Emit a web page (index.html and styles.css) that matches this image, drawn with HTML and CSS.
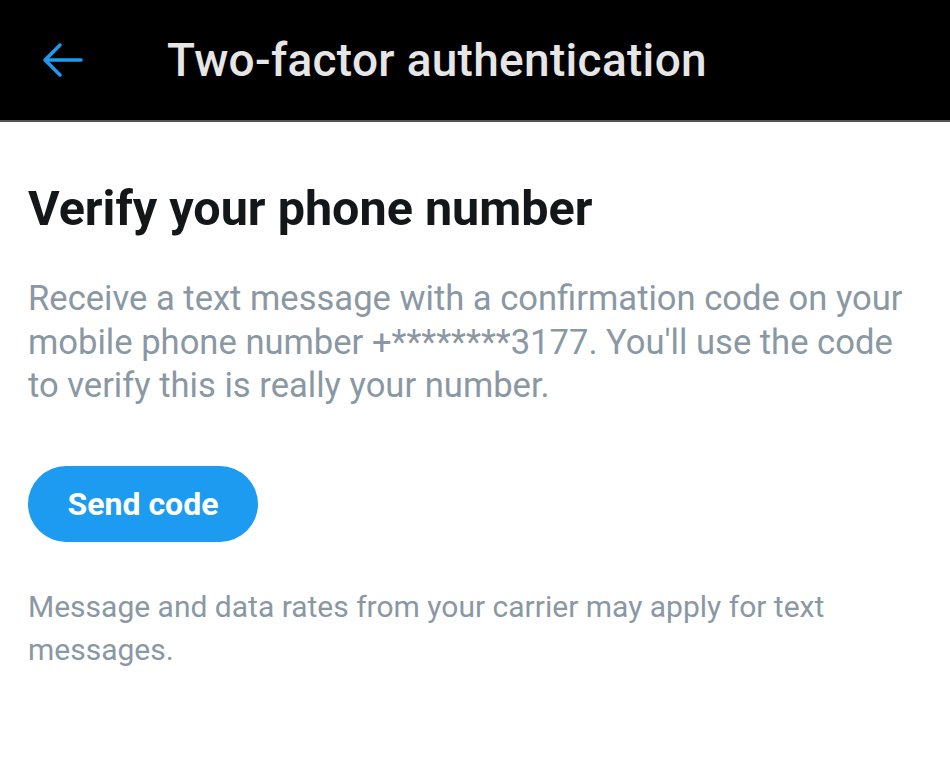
FILE: index.html
```html
<!DOCTYPE html>
<html lang="en">
<head>
    <meta charset="UTF-8">
    <meta name="viewport" content="width=device-width, initial-scale=1.0">
    <title>Two-factor authentication</title>
    <link rel="stylesheet" href="styles.css">
</head>
<body>
    <header class="topbar">
        <button class="back" aria-label="Back">
            <svg width="42" height="36" viewBox="0 0 42 36" fill="none" stroke="#1d9bf0" stroke-width="3.5" stroke-linecap="round" stroke-linejoin="round">
                <path d="M40 18H4M19 3L4 18l15 15"/>
            </svg>
        </button>
        <h1 class="title">Two-factor authentication</h1>
    </header>
    <main class="content">
        <h2 class="heading">Verify your phone number</h2>
        <p class="desc">Receive a text message with a confirmation code on your mobile phone number +********3177. You'll use the code to verify this is really your number.</p>
        <button class="send">Send code</button>
        <p class="note">Message and data rates from your carrier may apply for text messages.</p>
    </main>
</body>
</html>
```

FILE: styles.css
```css
body {
    margin: 0;
    font-family: Roboto, "Liberation Sans", Arial, sans-serif;
    background: #fff;
}

.topbar {
    display: flex;
    align-items: center;
    height: 120px;
    background: #000;
    border-bottom: 2px solid #555;
    padding-left: 41px;
}

.back {
    background: none;
    border: none;
    padding: 0;
    display: flex;
    margin-right: 84px;
}

.title {
    margin: 0;
    color: #e6e6e6;
    font-size: 46px;
    font-weight: 500;
    letter-spacing: 0.3px;
}

.content {
    padding: 0 28px;
}

.heading {
    margin: 57px 0 0;
    font-size: 48.5px;
    font-weight: 700;
    color: #14171a;
    line-height: 60px;
}

.desc {
    margin: 38px 0 0;
    font-size: 34.6px;
    line-height: 43.5px;
    color: #8a98a4;
}

.send {
    display: block;
    margin-top: 58px;
    width: 230px;
    height: 76px;
    border: none;
    border-radius: 38px;
    background: #1d9bf0;
    color: #fff;
    font-family: inherit;
    font-size: 32px;
    font-weight: 700;
}

.note {
    margin: 43px 0 0;
    font-size: 30px;
    line-height: 43px;
    color: #8a98a4;
}
```
